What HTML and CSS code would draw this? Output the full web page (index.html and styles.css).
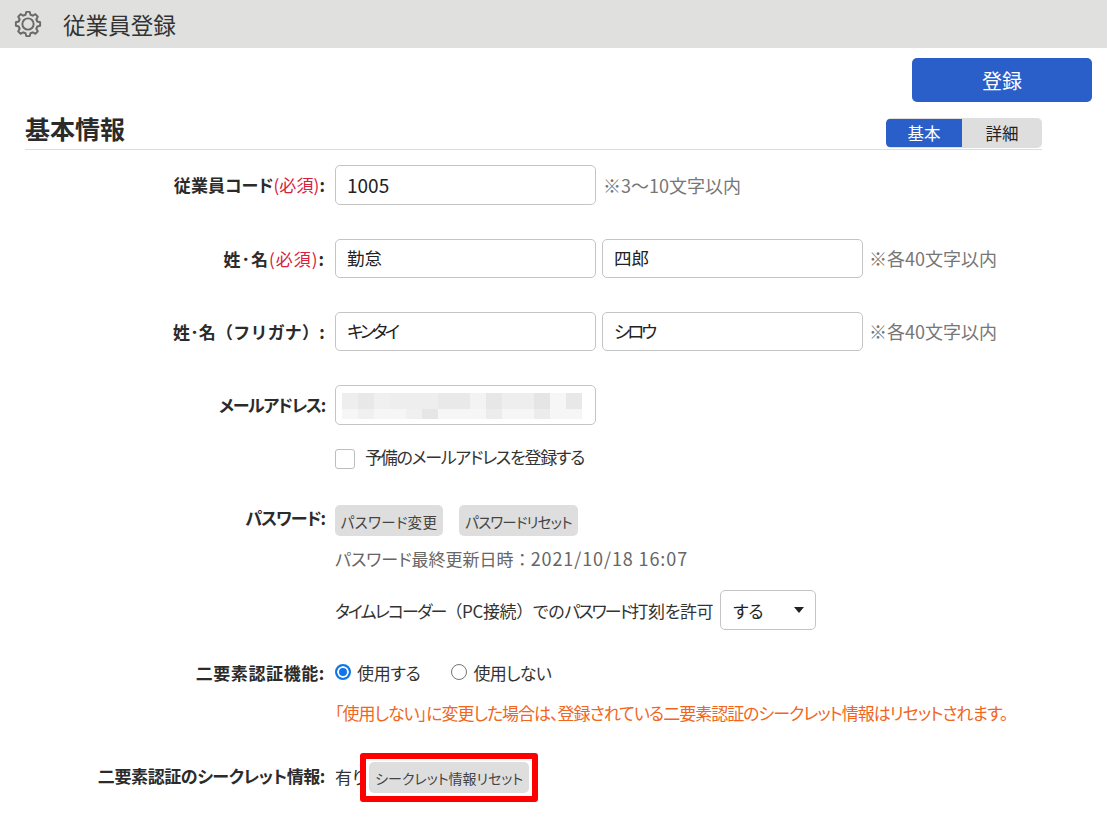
FILE: index.html
```html
<!DOCTYPE html>
<html lang="ja">
<head>
<meta charset="utf-8">
<title>従業員登録</title>
<link rel="stylesheet" href="styles.css">
</head>
<body>
<header class="topbar">
  <svg class="gear" viewBox="0 0 24 24" fill="none" stroke="#6a6a6a" stroke-width="1.8" stroke-linejoin="round" stroke-linecap="round">
    <circle cx="12" cy="12" r="5.2"/>
    <path id="tooth" d="M8.63 3.87 9.72 3.5 10.4.8h3.2l.68 2.7 1.09.37"/>
    <use href="#tooth" transform="rotate(45 12 12)"/>
    <use href="#tooth" transform="rotate(90 12 12)"/>
    <use href="#tooth" transform="rotate(135 12 12)"/>
    <use href="#tooth" transform="rotate(180 12 12)"/>
    <use href="#tooth" transform="rotate(225 12 12)"/>
    <use href="#tooth" transform="rotate(270 12 12)"/>
    <use href="#tooth" transform="rotate(315 12 12)"/>
  </svg>
  <h1 class="title">従業員登録</h1>
</header>
<div class="actions"><button class="primary">登録</button></div>
<section class="panel">
  <div class="section-head">
    <h2 class="section-title">基本情報</h2>
    <div class="tabs"><span class="tab active">基本</span><span class="tab">詳細</span></div>
  </div>
  <div class="row row-code">
    <div class="label l-code">従業員コード<span class="req">(必須)</span>:</div>
    <div class="fields"><div class="input">1005</div><span class="hint">※3〜10文字以内</span></div>
  </div>
  <div class="row row-name">
    <div class="label l-name">姓･名<span class="req">(必須)</span>:</div>
    <div class="fields"><div class="input short">勤怠</div><div class="input short">四郎</div><span class="hint">※各40文字以内</span></div>
  </div>
  <div class="row row-name">
    <div class="label l-kana">姓･名（フリガナ）:</div>
    <div class="fields"><div class="input short kana">キンタイ</div><div class="input short kana">シロウ</div><span class="hint">※各40文字以内</span></div>
  </div>
  <div class="row row-mail">
    <div class="label l-mail">メールアドレス:</div>
    <div class="stack">
      <div class="input mail">
        <svg class="blur" viewBox="0 0 240 26" shape-rendering="crispEdges">
          <rect width="240" height="16" fill="#eeeeee"/>
          <rect y="16" width="240" height="10" fill="#f6f6f6"/>
          <rect x="16" width="16" height="16" fill="#e8e8e8"/>
          <rect x="32" width="16" height="16" fill="#f0f0f0"/>
          <rect x="96" width="32" height="16" fill="#e9e9e9"/>
          <rect x="128" width="16" height="16" fill="#f3f3f3"/>
          <rect x="144" width="16" height="16" fill="#e7e7e7"/>
          <rect x="192" width="16" height="16" fill="#e5e5e5"/>
          <rect x="208" width="16" height="16" fill="#f6f6f6"/>
          <rect x="224" width="16" height="16" fill="#e8e8e8"/>
          <rect x="80" y="16" width="16" height="10" fill="#e6e6e6"/>
          <rect x="64" y="16" width="16" height="10" fill="#f0f0f0"/>
          <rect x="16" y="16" width="16" height="10" fill="#f0f0f0"/>
          <rect x="144" y="16" width="16" height="10" fill="#ececec"/>
          <rect x="192" y="16" width="16" height="10" fill="#ececec"/>
        </svg>
      </div>
      <label class="check"><span class="checkbox"></span><span class="check-text">予備のメールアドレスを登録する</span></label>
    </div>
  </div>
  <div class="row row-pass">
    <div class="label label-pass">パスワード:</div>
    <div class="stack">
      <div class="btns"><button class="gray pw-change">パスワード変更</button><button class="gray pw-reset">パスワードリセット</button></div>
      <div class="note">パスワード最終更新日時<span class="full">：</span><span class="digits">2021/10/18 16:07</span></div>
      <div class="perm"><span class="tight">タイムレコーダー</span><span class="full">（PC接続）</span>での<span class="tight">パスワード</span>打刻を許可<div class="select">する<span class="caret"></span></div></div>
    </div>
  </div>
  <div class="row row-two">
    <div class="label label-two">二要素認証機能:</div>
    <div class="stack">
      <div class="radios">
        <label class="radio"><span class="dot on"></span>使用する</label>
        <label class="radio r-off"><span class="dot"></span>使用しない</label>
      </div>
      <div class="warn">「使用しない」に変更した場合は、登録されている二要素認証のシークレット情報はリセットされます。</div>
    </div>
  </div>
  <div class="row row-secret">
    <div class="label l-secret">二要素認証のシークレット情報:</div>
    <div class="secret">有り
      <button class="gray wide">シークレット情報リセット</button>
      <span class="redbox"></span>
    </div>
  </div>
</section>
</body>
</html>
```

FILE: styles.css
```css
* { box-sizing: border-box; }
html, body { margin: 0; padding: 0; }
body {
  height: 817px;
  overflow: hidden;
  background: #fff;
  color: #333;
  font-family: "Noto Sans CJK JP", "Noto Sans", sans-serif;
  font-size: 16px;
  font-feature-settings: "palt";
}
.topbar {
  height: 48px;
  background: #e0e0de;
  display: flex;
  align-items: center;
  padding-left: 15px;
}
.gear { width: 26px; height: 26px; overflow: visible; }
.title { margin: 0 0 0 22px; font-size: 22.6px; font-weight: 400; color: #333; font-feature-settings: normal; }
.actions { display: flex; justify-content: flex-end; padding: 10px 15px 0 0; }
button { font-family: inherit; border: 0; font-feature-settings: "palt"; }
.primary {
  width: 180px; height: 44px;
  background: #2a5ec9; color: #fff;
  border-radius: 5px; font-size: 20px;
  font-feature-settings: normal;
}
.panel { margin: 0 65px 0 25px; }
.section-head {
  height: 47px;
  margin-top: 1px;
  padding-top: 15px;
  border-bottom: 1px solid #dddddd;
  display: flex;
  justify-content: space-between;
  align-items: flex-start;
}
.section-title { margin: -6px 0 0; font-size: 25px; line-height: 32px; font-weight: 700; color: #2b2b2b; font-feature-settings: normal; }
.tabs { display: flex; width: 156px; height: 30px; padding: 1px 0 1px 0; border-radius: 5px; overflow: hidden; background: #dedede; }
.tab { text-align: center; font-size: 16.5px; line-height: 28px; color: #222; font-feature-settings: normal; }
.tab.active { flex: 0 0 76px; background: #2a5ec9; color: #fff; border-radius: 4px 0 0 4px; }
.tab:last-child { flex: 0 0 80px; }
.row { display: grid; grid-template-columns: 301px 1fr; column-gap: 9px; }
.row-code { margin-top: 15px; height: 74px; }
.row-name { height: 73px; }
.row-mail { height: 120px; }
.row-pass { height: 152px; }
.row-two { height: 105px; }
.label {
  text-align: right;
  font-weight: 700;
  font-size: 17px;
  line-height: 40px;
  color: #2b2b2b;
  white-space: nowrap;
  padding-right: 1px;
}
.l-code { letter-spacing: .1px; }
.l-name { letter-spacing: 1px; }
.l-kana { font-feature-settings: normal; letter-spacing: .2px; }
.l-mail { letter-spacing: -1.3px; line-height: 39px; }
.label-pass { letter-spacing: -1px; line-height: 26px; }
.label-two { letter-spacing: .6px; line-height: 32px; }
.l-secret { letter-spacing: -.4px; line-height: 28px; }
.req { color: #d8203c; font-weight: 400; }
.fields { display: flex; align-items: flex-start; gap: 6px; }
.input {
  width: 261px; height: 39px;
  border: 1px solid #c4c4c4;
  border-radius: 5px;
  padding: 0 11px;
  line-height: 36px;
  font-size: 17.5px;
  color: #222;
  background: #fff;
}
.row-code .input { height: 40px; line-height: 38px; font-size: 19px; }
.kana { letter-spacing: -3px; }
.hint { color: #777; font-size: 18px; line-height: 40px; padding-left: 1px; }
.row-name .hint { line-height: 38px; padding-left: 0; }
.input.short { flex: 0 0 261px; }
.mail { height: 40px; padding: 7px 6px; }
.blur { display: block; width: 240px; height: 26px; }
.stack { display: flex; flex-direction: column; align-items: flex-start; }
.check { display: flex; align-items: flex-start; margin-top: 24px; font-size: 17px; line-height: 20px; color: #333; }
.checkbox { width: 20px; height: 20px; border: 1px solid #bdbdbd; border-radius: 3px; margin-right: 10px; }
.check-text { letter-spacing: -1.25px; margin-top: -2px; }
.btns { display: flex; gap: 16px; }
.gray {
  height: 31px; padding: 1px 0 0;
  background: #dedede; color: #444;
  border-radius: 5px;
  font-size: 14.5px;
  white-space: nowrap;
}
.pw-change { width: 108px; letter-spacing: .3px; }
.pw-reset { width: 119px; letter-spacing: -.8px; }
.note { margin-top: 9px; font-size: 17px; line-height: 26px; color: #666; white-space: nowrap; }
.full { font-feature-settings: normal; }
.digits { font-size: 18px; letter-spacing: .9px; }
.tight { letter-spacing: -1.9px; }
.perm { display: flex; align-items: center; margin-top: 18px; font-size: 17px; letter-spacing: -.36px; color: #333; white-space: nowrap; }
.select {
  position: relative;
  width: 96px; height: 40px;
  margin-left: 7px;
  border: 1px solid #c4c4c4;
  border-radius: 5px;
  padding-left: 12px;
  line-height: 40px;
  font-size: 17px;
  color: #222;
}
.caret {
  position: absolute; right: 11px; top: 16px;
  border-left: 5px solid transparent; border-right: 5px solid transparent;
  border-top: 6px solid #222;
}
.radios { display: flex; gap: 31px; height: 32px; align-items: center; }
.radio { display: flex; align-items: center; font-size: 17px; line-height: 22px; color: #333; letter-spacing: -.3px; }
.r-off { letter-spacing: -.7px; }
.dot { width: 16px; height: 16px; border: 1px solid #757575; border-radius: 50%; margin-right: 6px; position: relative; top: -1px; background: #fff; }
.dot.on { border: 2px solid #0f75e8; box-shadow: inset 0 0 0 2px #fff; background: #0f75e8; }
.warn { margin-top: 12px; font-size: 17px; line-height: 24px; color: #f0661c; white-space: nowrap; letter-spacing: -1px; }
.secret { position: relative; display: flex; align-items: flex-start; font-size: 17px; line-height: 30px; color: #333; gap: 3px; }
.wide { width: 160px; font-size: 14px; }
.redbox {
  position: absolute;
  left: 25px; top: -9px;
  width: 178px; height: 49px;
  border: 6px solid #f00;
  border-radius: 3px;
}
```
